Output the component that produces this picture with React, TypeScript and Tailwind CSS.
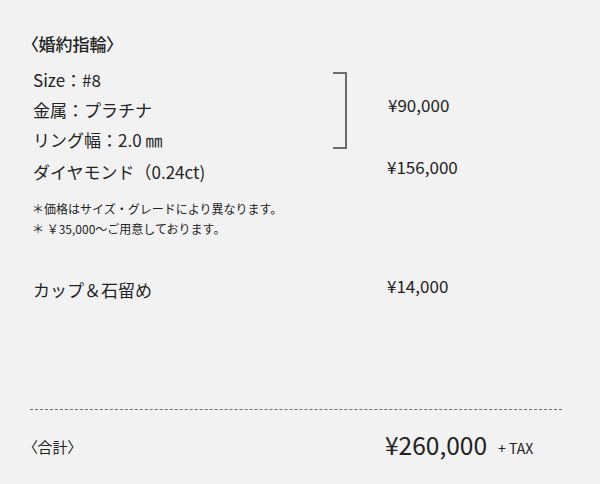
const priced = [
  'Size：#8',
  '金属：プラチナ',
  'リング幅：2.0 ㎜',
]

export default function App() {
  return (
    <div className="w-[600px] h-[484px] bg-[#f2f2f2] text-[#222] font-['Noto_Sans_CJK_JP',sans-serif] pt-[32px] px-[30px]">
      {/* 婚約指輪 */}
      <h2 className="text-[17px] leading-[24px] font-medium [font-feature-settings:'palt']">〈婚約指輪〉</h2>

      <div className="mt-[9px] flex">
        <ul className="w-[303px] pl-[3px] text-[17px] leading-[30px]">
          {priced.map((label) => (
            <li key={label}>{label}</li>
          ))}
        </ul>
        <div className="mt-[7px] w-[14px] h-[77px] border-2 border-l-0 border-[#6b6b6b]" />
        <p className="ml-[41px] mt-[25px] text-[17px] leading-[30px]">¥90,000</p>
      </div>

      <div className="mt-[2px] flex">
        <p className="w-[357px] pl-[3px] text-[17px] leading-[30px]">ダイヤモンド（0.24ct)</p>
        <p className="-mt-[5px] text-[17px] leading-[30px]">¥156,000</p>
      </div>

      <div className="mt-[12px] pl-[2px] text-[12px] leading-[20px]">
        <p>＊価格はサイズ・グレードにより異なります。</p>
        <p>＊ ￥35,000〜ご用意しております。</p>
      </div>

      <div className="mt-[36px] flex">
        <p className="w-[357px] pl-[3px] text-[17px] leading-[30px]">カップ＆石留め</p>
        <p className="-mt-[4px] text-[17px] leading-[30px]">¥14,000</p>
      </div>

      {/* 合計 */}
      <div className="mt-[104px] w-[532px] border-t border-dashed border-[#6f6f6f]" />
      <div className="mt-[18px] flex items-end">
        <p className="w-[355px] text-[15px] leading-[24px] mb-[3px] [font-feature-settings:'palt']">〈合計〉</p>
        <p className="text-[24.5px] leading-[34px]">¥260,000</p>
        <p className="ml-[11px] mb-[4px] text-[14px] leading-[20px]">+ TAX</p>
      </div>
    </div>
  )
}
